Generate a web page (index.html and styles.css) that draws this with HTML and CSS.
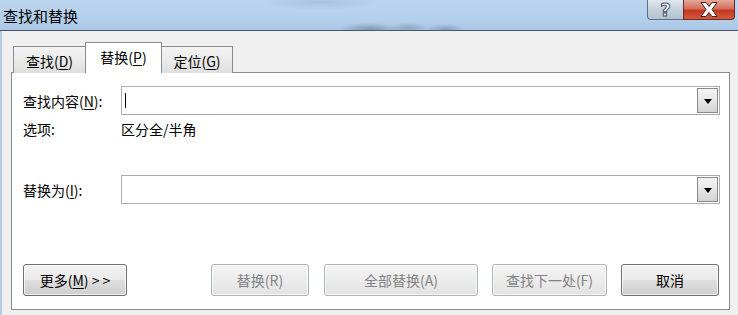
FILE: index.html
```html
<!DOCTYPE html>
<html lang="zh-CN">
<head>
<meta charset="utf-8">
<title>查找和替换</title>
<link rel="stylesheet" href="styles.css">
</head>
<body>
<div class="window">
  <div class="titlebar">
    <span class="title">查找和替换</span>
    <div class="caption-btns">
      <div class="cap-help"><span class="q">?</span></div>
      <div class="cap-close">
        <svg width="22" height="17" viewBox="0 0 22 17">
          <path d="M3 1.5 L8 1.5 L11 5.5 L14 1.5 L19 1.5 L14 8.5 L19 15.5 L14 15.5 L11 11.5 L8 15.5 L3 15.5 L8 8.5 Z" fill="#fff" stroke="#4a2320" stroke-width="1" stroke-linejoin="round"/>
        </svg>
      </div>
    </div>
  </div>
  <div class="client">
    <div class="tabs">
      <div class="tab tab-first">查找(<u>D</u>)</div>
      <div class="tab tab-active">替换(<u>P</u>)</div>
      <div class="tab tab-last">定位(<u>G</u>)</div>
    </div>
    <div class="panel">
      <div class="row row-find">
        <label class="label">查找内容(<u>N</u>):</label>
        <div class="combo">
          <span class="caret"></span>
          <div class="drop"><span class="arrow"></span></div>
        </div>
      </div>
      <div class="row row-options">
        <span class="label">选项:</span>
        <span class="value">区分全/半角</span>
      </div>
      <div class="row row-replace">
        <label class="label">替换为(<u>I</u>):</label>
        <div class="combo">
          <div class="drop"><span class="arrow"></span></div>
        </div>
      </div>
      <div class="buttons">
        <button class="btn btn-more">更多(<u>M</u>) &gt; &gt;</button>
        <button class="btn btn-replace" disabled>替换(R)</button>
        <button class="btn btn-all" disabled>全部替换(A)</button>
        <button class="btn btn-next" disabled>查找下一处(F)</button>
        <button class="btn btn-cancel">取消</button>
      </div>
    </div>
  </div>
</div>
</body>
</html>
```
FILE: styles.css
```css
* { box-sizing: border-box; }
html, body {
  margin: 0;
  padding: 0;
  width: 738px;
  height: 315px;
  overflow: hidden;
  background: #f0f0f0;
  font-family: "Noto Sans CJK SC", "Noto Sans", sans-serif;
  font-size: 14px;
  color: #000;
}
u { text-decoration: underline; text-underline-offset: 2px; }

.window {
  width: 738px;
  height: 315px;
  display: flex;
  flex-direction: column;
}

.titlebar {
  height: 31px;
  display: flex;
  align-items: flex-start;
  justify-content: space-between;
  background:
    radial-gradient(ellipse 30px 6px at 370px 29px, rgba(80,95,115,0.45), transparent),
    radial-gradient(ellipse 20px 5px at 408px 28px, rgba(80,95,115,0.35), transparent),
    radial-gradient(ellipse 20px 5px at 445px 29px, rgba(80,95,115,0.35), transparent),
    radial-gradient(ellipse 60px 8px at 320px 2px, rgba(120,140,165,0.25), transparent),
    linear-gradient(to bottom, #bcd5ee 0%, #b5d0ec 60%, #a8c6e6 100%);
  border-bottom: 1px solid #4b5766;
}
.title {
  font-size: 15px;
  line-height: 15px;
  margin: 8px 0 0 3px;
  color: #000;
}
.caption-btns {
  display: flex;
  margin-right: 3px;
}
.cap-help {
  width: 36px;
  height: 20px;
  border: 1px solid #5c6f86;
  border-top: none;
  border-right: none;
  border-radius: 0 0 0 4px;
  background: linear-gradient(to bottom, #dfe6ee 0%, #c6d1dd 50%, #b4c1cf 100%);
  display: flex;
  align-items: center;
  justify-content: center;
}
.q {
  font-family: "DejaVu Sans", sans-serif;
  font-weight: bold;
  font-size: 18px;
  line-height: 18px;
  color: #fff;
  -webkit-text-stroke: 1px #465466;
}
.cap-close {
  width: 52px;
  height: 20px;
  border: 1px solid #6b2a22;
  border-top: none;
  border-radius: 0 0 4px 0;
  background: linear-gradient(to bottom, #e6a798 0%, #d4705c 45%, #c0381f 55%, #d45a3e 100%);
  display: flex;
  align-items: center;
  justify-content: center;
}

.client {
  flex: 1;
  border-left: 2px solid #b3cbe3;
  padding-top: 11px;
  padding-left: 9px;
}

.tabs {
  display: flex;
  align-items: flex-end;
  height: 31px;
  margin-left: 2px;
  margin-bottom: -1px;
  position: relative;
  z-index: 1;
}
.tab {
  height: 27px;
  border: 1px solid #898c95;
  border-bottom: none;
  background: linear-gradient(to bottom, #f3f3f3 0%, #ebebeb 50%, #dedede 100%);
  display: flex;
  align-items: center;
  justify-content: center;
  line-height: 16px;
  padding-top: 1px;
}
.tab-first { width: 72px; border-right: none; }
.tab-active {
  width: 77px;
  height: 31px;
  background: #fff;
  padding-bottom: 3px;
}
.tab-last { width: 71px; border-left: none; }

.panel {
  width: 719px;
  height: 238px;
  border: 1px solid #898c95;
  background: #fff;
  padding: 13px 9px 0 11px;
}

.row {
  display: flex;
  align-items: center;
}
.label {
  width: 98px;
  flex: none;
  line-height: 16px;
}
.combo {
  flex: 1;
  height: 29px;
  border: 1px solid #abadb3;
  background: #fff;
  display: flex;
  align-items: center;
  justify-content: space-between;
  padding: 1px;
}
.caret {
  width: 1px;
  height: 15px;
  background: #000;
  margin-left: 2px;
}
.drop {
  margin-left: auto;
  width: 21px;
  height: 25px;
  border: 1px solid #8a8a8a;
  background: linear-gradient(to bottom, #f4f4f4 0%, #e6e6e6 50%, #d3d3d3 100%);
  display: flex;
  align-items: center;
  justify-content: center;
}
.arrow {
  width: 0;
  height: 0;
  border-left: 4px solid transparent;
  border-right: 4px solid transparent;
  border-top: 5px solid #000;
  margin-top: 1px;
}

.row-options {
  margin-top: 6px;
  height: 16px;
  line-height: 16px;
}
.row-replace { margin-top: 38px; }

.buttons {
  margin-top: 60px;
  display: flex;
  align-items: center;
  padding-right: 1px;
}
.btn {
  height: 32px;
  font-family: "Noto Sans CJK SC", "Noto Sans", sans-serif;
  font-size: 14px;
  color: #000;
  border: 1px solid #707070;
  border-radius: 3px;
  background: linear-gradient(to bottom, #f2f2f2 0%, #ebebeb 48%, #dddddd 52%, #cfcfcf 100%);
  box-shadow: inset 0 0 0 1px rgba(255,255,255,0.7);
  padding: 0;
  line-height: 16px;
}
.btn:disabled {
  color: #838383;
  border-color: #adb2b5;
  background: linear-gradient(to bottom, #f4f4f4 0%, #ececec 50%, #e2e2e2 100%);
}
.btn-more { width: 104px; }
.btn-replace { width: 98px; margin-left: auto; }
.btn-all { width: 154px; margin-left: 15px; }
.btn-next { width: 115px; margin-left: 14px; }
.btn-cancel { width: 98px; margin-left: 14px; }
```
